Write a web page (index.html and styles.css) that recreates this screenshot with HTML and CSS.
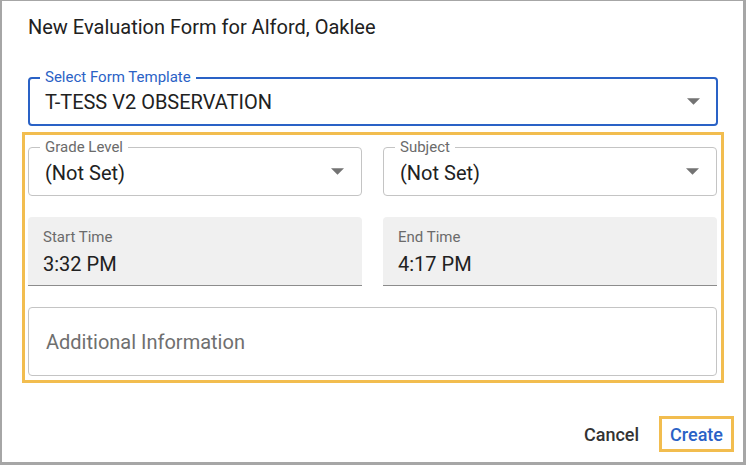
FILE: index.html
```html
<!DOCTYPE html>
<html lang="en">
<head>
  <meta charset="UTF-8" />
  <title>New Evaluation Form</title>
  <link rel="stylesheet" href="styles.css">
</head>
<body>

  <div class="dialog">
    <h1 class="dialog-title">New Evaluation Form for Alford, Oaklee</h1>

    <div class="field outlined focused">
      <span class="field-label">Select Form Template</span>
      <span class="field-value">T-TESS V2 OBSERVATION</span>
      <svg class="arrow" viewBox="0 0 14 7"><path d="M0 0h14L7 7z"/></svg>
    </div>

    <div class="highlight">
      <div class="row">
        <div class="field outlined">
          <span class="field-label">Grade Level</span>
          <span class="field-value">(Not Set)</span>
          <svg class="arrow" viewBox="0 0 14 7"><path d="M0 0h14L7 7z"/></svg>
        </div>
        <div class="field outlined">
          <span class="field-label">Subject</span>
          <span class="field-value">(Not Set)</span>
          <svg class="arrow" viewBox="0 0 14 7"><path d="M0 0h14L7 7z"/></svg>
        </div>
      </div>

      <div class="row">
        <div class="field filled">
          <span class="filled-label">Start Time</span>
          <span class="filled-value">3:32 PM</span>
        </div>
        <div class="field filled">
          <span class="filled-label">End Time</span>
          <span class="filled-value">4:17 PM</span>
        </div>
      </div>

      <div class="field textarea">
        <span class="placeholder">Additional Information</span>
      </div>
    </div>

    <div class="actions">
      <button class="btn cancel">Cancel</button>
      <button class="btn create">Create</button>
    </div>
  </div>

</body>
</html>
```

FILE: styles.css
```css
body {
  margin: 0;
  font-family: Roboto, 'Liberation Sans', sans-serif;
  background: #fff;
  color: #212121;
}

.dialog {
  width: 746px;
  height: 465px;
  box-sizing: border-box;
  border-style: solid;
  border-color: #a6a6a6;
  border-width: 1px 3px 3px 2px;
  padding: 14px 25px 0 26px;
  background: #fff;
}

.dialog-title {
  margin: 0;
  font-size: 20px;
  font-weight: 400;
  line-height: 24px;
  color: #212121;
}

.field {
  position: relative;
  box-sizing: border-box;
}

.outlined {
  height: 49px;
  border: 1px solid #c4c4c4;
  border-radius: 4px;
  display: flex;
  align-items: center;
  padding: 0 16px;
}

.focused {
  margin-top: 38px;
  border: 2px solid #2a62c6;
  padding: 0 15px;
  width: 690px;
}

.field-label {
  position: absolute;
  top: -10px;
  left: 11px;
  padding: 0 5px;
  background: #fff;
  font-size: 15px;
  line-height: 18px;
  color: #6b6b6b;
}

.focused .field-label {
  top: -11px;
  left: 10px;
  color: #2a62c6;
}

.field-value {
  flex: 1;
  font-size: 20px;
  padding-top: 2px;
  color: #212121;
}

.focused .field-value {
  padding-top: 1px;
}

.arrow {
  width: 13px;
  height: 7px;
  fill: #737373;
  margin-right: 1px;
}

.highlight {
  margin: 6px -6px 0;
  border: 3px solid #f2bd4f;
  padding: 12px 4px 4px 3px;
}

.row {
  display: grid;
  grid-template-columns: 1fr 1fr;
  gap: 21px;
  margin-bottom: 21px;
}

.filled {
  height: 69px;
  background: #f0f0f0;
  border-radius: 4px 4px 0 0;
  border-bottom: 1px solid #8c8c8c;
  padding: 11px 15px 0;
  display: flex;
  flex-direction: column;
}

.filled-label {
  font-size: 15px;
  line-height: 18px;
  color: #6b6b6b;
}

.filled-value {
  margin-top: 6px;
  font-size: 20px;
  line-height: 24px;
  color: #212121;
}

.textarea {
  height: 69px;
  border: 1px solid #c4c4c4;
  border-radius: 4px;
  display: flex;
  align-items: center;
  padding: 0 17px;
}

.placeholder {
  font-size: 20px;
  color: #6f6f6f;
  padding-top: 1px;
}

.actions {
  display: flex;
  justify-content: flex-end;
  align-items: center;
  gap: 9px;
  margin-top: 33px;
  margin-right: -16px;
}

.btn {
  font-family: Roboto, 'Liberation Sans', sans-serif;
  font-size: 18px;
  line-height: 21px;
  font-weight: 500;
  background: none;
  border: 3px solid transparent;
  padding: 5px 8px 4px;
  cursor: pointer;
}

.cancel {
  color: #333;
}

.create {
  color: #2a62c6;
  border-color: #f2bd4f;
}
```
